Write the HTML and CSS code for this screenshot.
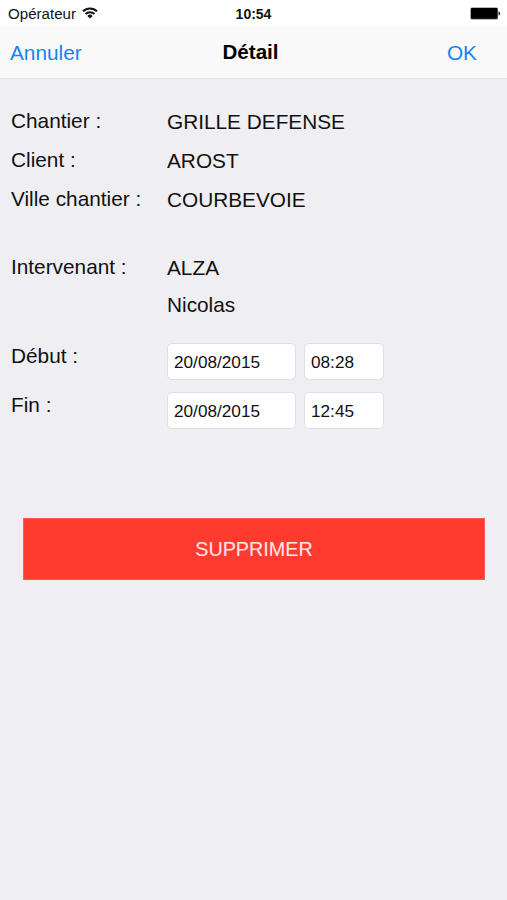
FILE: index.html
```html
<!DOCTYPE html>
<html lang="fr">
<head>
    <meta charset="UTF-8">
    <meta name="viewport" content="width=device-width, initial-scale=1.0">
    <title>Détail</title>
    <link rel="stylesheet" href="styles.css">
</head>
<body>
    <div class="status">
        <div class="operator">
            <span>Opérateur</span>
            <svg class="wifi" width="16" height="12" viewBox="0 0 16 12">
                <path d="M1 4.3a10 10 0 0 1 14 0M3.5 7a6.5 6.5 0 0 1 9 0" fill="none" stroke="#111" stroke-width="1.9"/>
                <path d="M8 11.4L5.4 8.9a3.7 3.7 0 0 1 5.2 0z" fill="#111"/>
            </svg>
        </div>
        <span class="time">10:54</span>
        <svg class="battery" width="31" height="13" viewBox="0 0 31 13">
            <rect x="0.4" y="0.4" width="27.6" height="12" rx="1.5" fill="#777"/>
            <rect x="1" y="1" width="26.4" height="10.8" rx="0.8" fill="#000"/>
            <path d="M28.5 4.2a2.3 2.3 0 0 1 0 4.4z" fill="#222"/>
        </svg>
    </div>
    <header class="navbar">
        <a class="cancel">Annuler</a>
        <h1>Détail</h1>
        <a class="ok">OK</a>
    </header>
    <form class="detail">
        <div class="row">
            <span class="label">Chantier :</span>
            <span class="value">GRILLE DEFENSE</span>
        </div>
        <div class="row">
            <span class="label">Client :</span>
            <span class="value">AROST</span>
        </div>
        <div class="row">
            <span class="label">Ville chantier :</span>
            <span class="value">COURBEVOIE</span>
        </div>
        <div class="row person">
            <span class="label">Intervenant :</span>
            <span class="value">ALZA<br>Nicolas</span>
        </div>
        <div class="row slot">
            <label class="label" for="debut">Début :</label>
            <input class="date" id="debut" type="text" value="20/08/2015">
            <input class="hour" type="text" value="08:28">
        </div>
        <div class="row slot">
            <label class="label" for="fin">Fin :</label>
            <input class="date" id="fin" type="text" value="20/08/2015">
            <input class="hour" type="text" value="12:45">
        </div>
        <button type="button" class="delete">SUPPRIMER</button>
    </form>
</body>
</html>
```

FILE: styles.css
```css
*
{
    box-sizing: border-box;
}
body
{
    margin: 0;
    min-height: 900px;
    background-color: #efeef3;
    color: #111;
    font-family: "Liberation Sans", Arial, sans-serif;
    font-size: 20.8px;
}
.status
{
    display: grid;
    grid-template-columns: 1fr auto 1fr;
    height: 26px;
    padding: 1px 7px 0;
    background-color: #fff;
    line-height: 26px;
}
.operator
{
    display: flex;
    padding-left: 1px;
    font-size: 15.1px;
}
.wifi
{
    margin: 6px 0 0 6px;
}
.time
{
    font-size: 14px;
    font-weight: bold;
}
.battery
{
    justify-self: end;
    margin: 6px -1px 0 0;
}
.navbar
{
    display: grid;
    grid-template-columns: 1fr auto 1fr;
    height: 53px;
    padding: 0 30px 0 10px;
    border-bottom: 1px solid #e6e6e9;
    background-color: #f9f9f9;
    line-height: 54px;
}
.navbar h1
{
    margin: 0 0 0 14px;
    color: #000;
    font-size: 20.6px;
    line-height: 52px;
}
.cancel, .ok
{
    color: #1583fb;
}
.ok
{
    justify-self: end;
}
.detail
{
    padding: 23px 22px 0 11px;
}
.row
{
    display: flex;
    line-height: 39px;
}
.label
{
    width: 156px;
    margin-top: -1px;
}
.person
{
    margin-top: 30px;
    line-height: 37px;
}
.slot
{
    height: 37px;
    margin-top: 12px;
    line-height: 28px;
}
.person + .slot
{
    margin-top: 20px;
}
input
{
    height: 37px;
    padding: 2px 6px 0;
    border: 1px solid #dfdee2;
    border-radius: 5px;
    background-color: #fff;
    color: #111;
    font-family: inherit;
    font-size: 17.2px;
}
.date
{
    width: 129px;
    margin-right: 8px;
}
.hour
{
    width: 80px;
}
.delete
{
    display: block;
    width: 462px;
    height: 62px;
    margin: 89px 0 0 12px;
    padding: 0;
    border: 1px solid #ff5a50;
    background-color: #ff3b30;
    color: #ffe9e7;
    font-family: inherit;
    font-size: 19.8px;
}
```
